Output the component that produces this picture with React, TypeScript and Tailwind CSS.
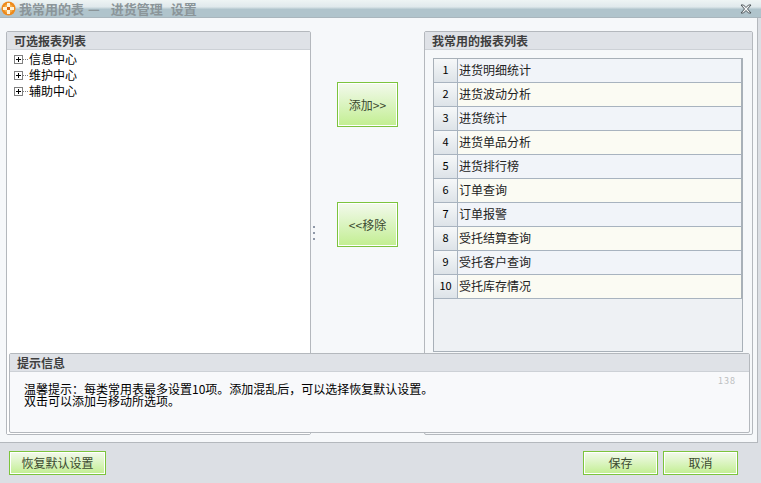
const reports = [
  "进货明细统计",
  "进货波动分析",
  "进货统计",
  "进货单品分析",
  "进货排行榜",
  "订单查询",
  "订单报警",
  "受托结算查询",
  "受托客户查询",
  "受托库存情况",
];

const tree = ["信息中心", "维护中心", "辅助中心"];

const font = "font-['SimSun','Noto_Sans_CJK_SC',sans-serif]";

function LogoIcon() {
  return (
    <svg width="15" height="15" viewBox="0 0 15 15" className="shrink-0">
      <circle cx="7.5" cy="7.5" r="7" fill="#ee8a1c" />
      <circle cx="7.5" cy="7.5" r="4.5" fill="#f6b04a" />
      <rect x="6" y="2" width="3" height="11" fill="#fff3d8" />
      <rect x="2" y="6" width="11" height="3" fill="#fff3d8" />
      <rect x="6" y="6" width="3" height="3" fill="#d9640f" />
    </svg>
  );
}

function CloseIcon() {
  return (
    <svg width="12" height="10" viewBox="0 0 12 10">
      <path d="M1 1h2.5L6 3.5 8.5 1H11L7.5 5 11 9H8.5L6 6.5 3.5 9H1l3.5-4z" fill="#f4f6f7" stroke="#4d5559" strokeWidth="1" />
    </svg>
  );
}

function PlusBox() {
  return (
    <span className="w-[9px] h-[9px] border border-[#808080] bg-white relative shrink-0">
      <span className="absolute left-[1px] top-[3px] w-[5px] h-px bg-black" />
      <span className="absolute left-[3px] top-[1px] w-px h-[5px] bg-black" />
    </span>
  );
}

function GreenButton({ label, className }: { label: string; className: string }) {
  return (
    <button className={`border border-[#7cc43c] shadow-[inset_0_0_0_1px_#ffffff] bg-gradient-to-b from-[#f3f9ec] to-[#c2ee90] text-[#3c4a30] text-[12px] ${className}`}>
      {label}
    </button>
  );
}

export default function App() {
  return (
    <div className={`w-[761px] h-[483px] flex flex-col bg-[#dcdfe4] overflow-hidden ${font}`}>
      <div className="h-[18px] flex items-center justify-between pl-[1px] pr-[9px] bg-gradient-to-b from-[#eef4f4] from-0% via-[#e0e9ec] via-40% to-[#b0c4cc] to-55% border-b border-[#a9b6bd]">
        <div className="flex items-center gap-[3px] text-[13px] font-bold text-[#8b9599] whitespace-nowrap">
          <LogoIcon />
          <span>我常用的表</span>
          <span className="ml-[1px]">—</span>
          <span className="ml-[8px]">进货管理</span>
          <span className="ml-[5px]">设置</span>
        </div>
        <CloseIcon />
      </div>

      <div className="relative h-[425px] mr-[3px] bg-[#f6f8fa] border-r border-b border-[#b4b8bd] pt-[13px] pl-[6px] pr-[4px] flex justify-between">
        <div className="w-[305px] h-[404px] border border-[#b4b8bd] rounded-[2px] flex flex-col">
          <div className="h-[18px] pl-[7px] flex items-center bg-[#dfe2e7] border-b border-[#cdd1d6] text-[12px] font-bold text-[#3f3f3f]">
            可选报表列表
          </div>
          <div className="flex-1 bg-white pt-[1px] pl-[7px]">
            {tree.map((name) => (
              <div key={name} className="h-[16px] flex items-center text-[12px] text-black">
                <PlusBox />
                <span className="w-[5px] border-t border-dotted border-[#808080]" />
                <span className="ml-[1px]">{name}</span>
              </div>
            ))}
          </div>
        </div>

        <div className="flex-1 relative flex flex-col items-center">
          <GreenButton label="添加>>" className="w-[61px] h-[45px] mt-[51px]" />
          <GreenButton label="<<移除" className="w-[61px] h-[45px] mt-[75px]" />
          <div className="absolute left-[2px] top-[195px] w-[2px] h-[14px] flex flex-col justify-between">
            <span className="h-[2px] bg-[#8f98a8]" />
            <span className="h-[2px] bg-[#8f98a8]" />
            <span className="h-[2px] bg-[#8f98a8]" />
          </div>
        </div>

        <div className="w-[329px] h-[404px] border border-[#b4b8bd] rounded-[2px] flex flex-col">
          <div className="h-[18px] pl-[7px] flex items-center bg-[#dfe2e7] border-b border-[#cdd1d6] text-[12px] font-bold text-[#3f3f3f]">
            我常用的报表列表
          </div>
          <div className="pt-[8px] pl-[8px]">
            <div className="w-[310px] h-[294px] border border-[#a8b0b8] bg-[#eef1f4]">
              {reports.map((name, i) => (
                <div key={name} className={`h-[24px] flex border-b border-[#a8b3bf] border-r border-r-[#a8b0b8] ${i % 2 === 0 ? "bg-[#f1f4f9]" : "bg-[#fbfbf3]"}`}>
                  <span className="w-[24px] pb-[2px] border-r border-[#a8b3bf] bg-gradient-to-b from-[#f6f8f9] to-[#dde3e8] flex items-center justify-center text-[11px] text-black">
                    {i + 1}
                  </span>
                  <span className="pl-[1px] pb-[2px] flex items-center text-[12px] text-[#222]">{name}</span>
                </div>
              ))}
            </div>
          </div>
        </div>

        <div className="absolute left-[9px] top-[335px] w-[741px] h-[80px] border border-[#b4b8bd] rounded-[2px] bg-[#f8f9fb] flex flex-col">
          <div className="h-[18px] pl-[7px] flex items-center bg-[#dfe2e7] border-b border-[#cdd1d6] text-[12px] font-bold text-[#3f3f3f]">
            提示信息
          </div>
          <div className="relative pt-[11px] pl-[14px] text-[12px] leading-[12px] text-black">
            <p>温馨提示：每类常用表最多设置10项。添加混乱后，可以选择恢复默认设置。</p>
            <p>双击可以添加与移动所选项。</p>
            <span className="absolute right-[13px] top-[3px] text-[9px] tracking-[1px] text-[#bcbec0]">138</span>
          </div>
        </div>
      </div>

      <div className="flex-1 flex items-center justify-between pl-[9px] pr-[23px]">
        <GreenButton label="恢复默认设置" className="w-[97px] h-[24px]" />
        <div className="flex gap-[5px]">
          <GreenButton label="保存" className="w-[75px] h-[24px]" />
          <GreenButton label="取消" className="w-[75px] h-[24px]" />
        </div>
      </div>
    </div>
  );
}
